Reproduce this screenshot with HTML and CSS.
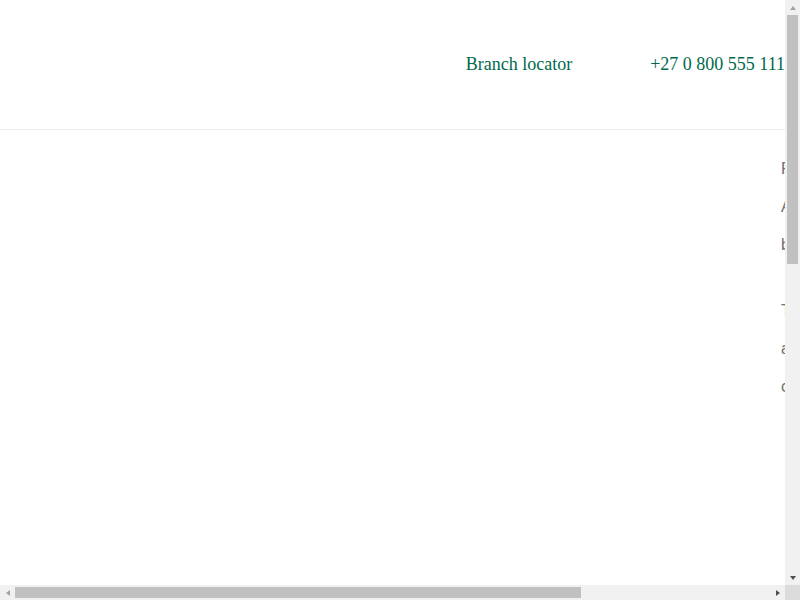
FILE: index.html
```html
<!DOCTYPE html>
<html lang="en">
<head>
<meta charset="utf-8">
<title>Branch locator</title>
<link rel="stylesheet" href="styles.css">
</head>
<body>
<div class="window">
  <div class="viewport">
    <header class="site-header">
      <nav class="top-nav">
        <a class="nav-link" href="#">Branch locator</a>
        <a class="nav-link phone" href="#">+27 0 800 555 111</a>
      </nav>
    </header>
    <main class="page">
      <div class="spacer"></div>
      <section class="side-text">
        <p class="para">Find a branch or ATM near you<br>Access our branch locator to find<br>branches and opening hours.</p>
        <p class="para">To book an appointment, call us<br>and speak to a consultant, or<br>contact your nearest branch.</p>
      </section>
    </main>
  </div>
  <div class="vbar">
    <div class="sb-btn"><span class="arrow up disabled"></span></div>
    <div class="vtrack"><div class="vthumb"></div></div>
    <div class="sb-btn"><span class="arrow down"></span></div>
  </div>
  <div class="hbar">
    <div class="sb-btn"><span class="arrow left disabled"></span></div>
    <div class="htrack"><div class="hthumb"></div></div>
    <div class="sb-btn"><span class="arrow right"></span></div>
  </div>
  <div class="corner"></div>
</div>
</body>
</html>
```
FILE: styles.css
```css
html, body {
  margin: 0;
  padding: 0;
  background: #fff;
  overflow: hidden;
}
body {
  font-family: "Liberation Serif", "Times New Roman", serif;
}
.window {
  width: 800px;
  height: 600px;
  display: grid;
  grid-template-columns: 785px 15px;
  grid-template-rows: 585px 15px;
}
.viewport {
  overflow: hidden;
  min-width: 0;
  min-height: 0;
}
.vbar {
  background: #f1f1f1;
  display: flex;
  flex-direction: column;
}
.hbar {
  background: #f1f1f1;
  display: flex;
}
.corner {
  background: #dcdcdc;
}
.sb-btn {
  width: 15px;
  height: 15px;
  flex: 0 0 15px;
  display: flex;
  align-items: center;
  justify-content: center;
}
.vtrack {
  flex: 1;
  padding: 0 2px;
}
.vthumb {
  height: 249px;
  background: #c1c1c1;
}
.htrack {
  flex: 1;
  padding: 2px 0;
}
.hthumb {
  width: 566px;
  height: 11px;
  background: #c1c1c1;
}
.arrow {
  width: 0;
  height: 0;
  display: block;
}
.arrow.up {
  border-left: 3.5px solid transparent;
  border-right: 3.5px solid transparent;
  border-bottom: 4px solid #505050;
}
.arrow.down {
  border-left: 3.5px solid transparent;
  border-right: 3.5px solid transparent;
  border-top: 4px solid #505050;
}
.arrow.left {
  border-top: 3.5px solid transparent;
  border-bottom: 3.5px solid transparent;
  border-right: 4px solid #505050;
}
.arrow.right {
  border-top: 3.5px solid transparent;
  border-bottom: 3.5px solid transparent;
  border-left: 4px solid #505050;
}
.arrow.up.disabled {
  border-bottom-color: #a3a3a3;
}
.arrow.left.disabled {
  border-right-color: #a3a3a3;
}
.site-header {
  height: 127px;
  padding-bottom: 2px;
  border-bottom: 1px solid #eeeeee;
  display: flex;
  align-items: center;
  justify-content: flex-end;
}
.top-nav {
  display: flex;
  gap: 78px;
  align-items: center;
}
.nav-link {
  color: #006a4d;
  text-decoration: none;
  font-size: 18px;
  line-height: 22px;
}
.page {
  width: 1047px;
  min-height: 1174px;
  display: grid;
  grid-template-columns: 781px 266px;
  padding-top: 20px;
  box-sizing: border-box;
}
.side-text {
  font-family: "Liberation Sans", Arial, sans-serif;
  color: #707070;
  font-size: 16px;
  line-height: 38px;
  white-space: nowrap;
}
.para {
  margin: 0 0 28px 0;
}
```
